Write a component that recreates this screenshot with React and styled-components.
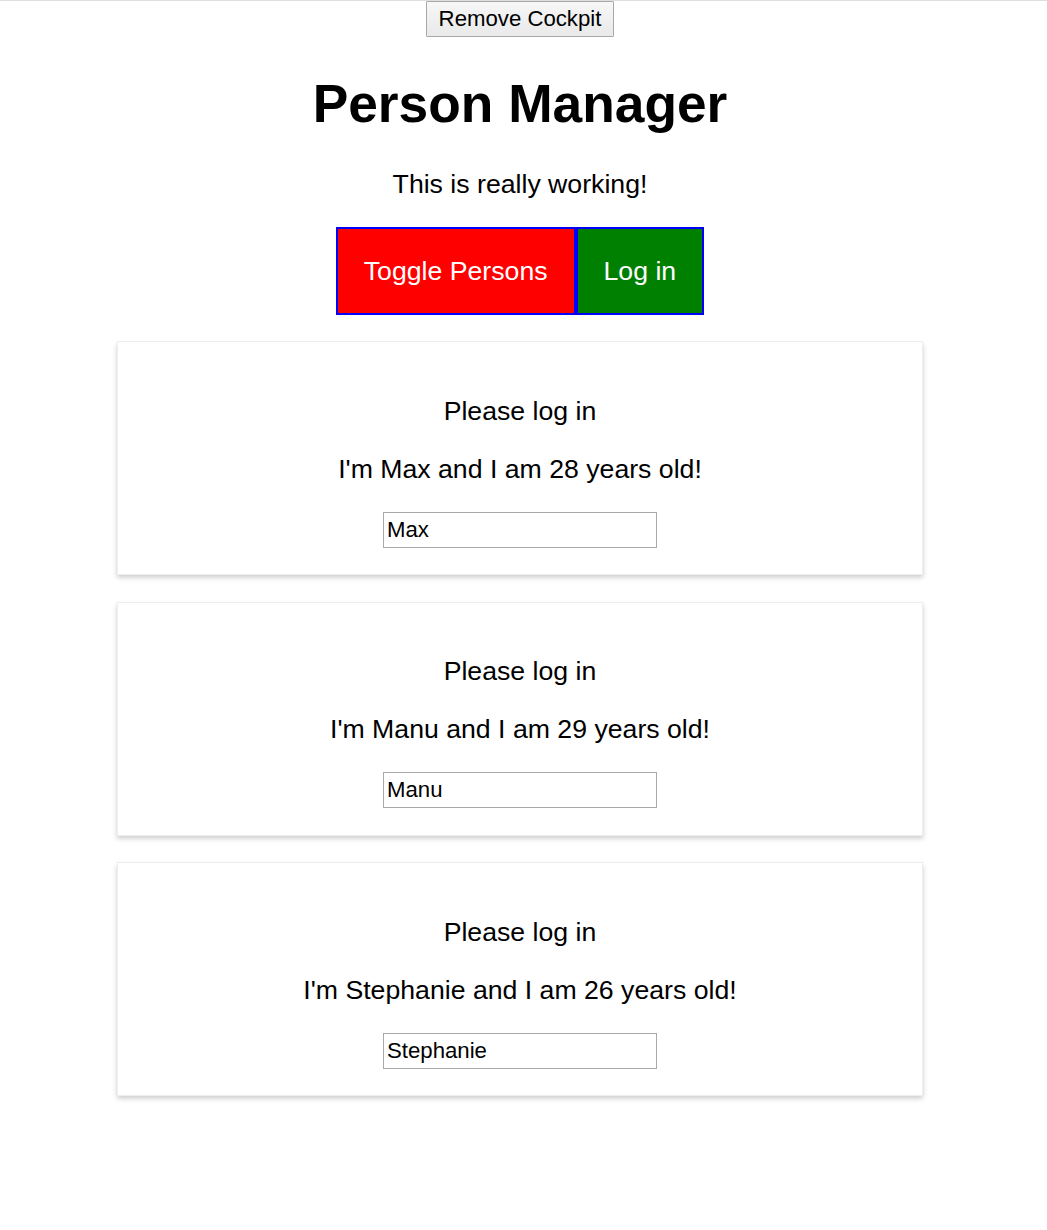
import React, { useState } from "react";
import styled, { createGlobalStyle } from "styled-components";

const GlobalStyle = createGlobalStyle`
  html, body {
    margin: 0;
    padding: 0;
    background: #fff;
  }
  body {
    border-top: 1px solid #dedede;
    font-family: "Liberation Sans", Arial, sans-serif;
    color: #000;
  }
`;

const AppWrap = styled.div`
  width: 1040px;
  text-align: center;
`;

const CockpitToggle = styled.button`
  box-sizing: border-box;
  height: 36px;
  padding: 0 12px;
  font-family: "Liberation Sans", Arial, sans-serif;
  font-size: 22.2px;
  color: #000;
  background: linear-gradient(#f7f7f7, #e9e9e9);
  border: 1.5px solid #a8a8a8;
  border-radius: 1px;
  cursor: pointer;
`;

const CockpitBox = styled.div`
  text-align: center;
`;

const Title = styled.h1`
  margin: 35.7px 0;
  font-size: 53.3px;
  font-weight: bold;
  line-height: 61px;
`;

const Text = styled.p`
  margin: 26.7px 0;
  font-size: 26.67px;
  line-height: ${(p) => (p.$tight ? "30.7px" : "31.2px")};
`;

const ButtonRow = styled.div`
  display: flex;
  justify-content: center;
`;

const ActionButton = styled.button`
  box-sizing: border-box;
  padding: 26px;
  font-family: "Liberation Sans", Arial, sans-serif;
  font-size: 26.67px;
  line-height: 32px;
  color: #fff;
  background-color: ${(p) => p.$bg};
  border: 2px solid blue;
  cursor: pointer;
`;

const Card = styled.div`
  width: 750px;
  margin: 26.7px auto;
  padding: 26.67px;
  border: 1.67px solid #eee;
  box-shadow: 0 3.3px 5px #ccc;
  text-align: center;
`;

const NameInput = styled.input`
  box-sizing: border-box;
  width: 274px;
  height: 36px;
  padding: 0 3px;
  font-family: "Liberation Sans", Arial, sans-serif;
  font-size: 22.2px;
  color: #000;
  border: 1.5px solid #a9a9a9;
`;

const InputLine = styled.div`
  display: flex;
  justify-content: center;
`;

function Person({ name, age, onChange }) {
  return (
    <Card>
      <Text>Please log in</Text>
      <Text>
        I'm {name} and I am {age} years old!
      </Text>
      <InputLine>
        <NameInput type="text" value={name} onChange={onChange} />
      </InputLine>
    </Card>
  );
}

export default function App() {
  const [persons, setPersons] = useState([
    { id: "a1", name: "Max", age: 28 },
    { id: "a2", name: "Manu", age: 29 },
    { id: "a3", name: "Stephanie", age: 26 },
  ]);
  const [showCockpit, setShowCockpit] = useState(true);
  const [showPersons, setShowPersons] = useState(true);

  const changeName = (id, value) =>
    setPersons((prev) => prev.map((p) => (p.id === id ? { ...p, name: value } : p)));

  return (
    <>
      <GlobalStyle />
      <AppWrap>
        <CockpitToggle onClick={() => setShowCockpit((s) => !s)}>
          Remove Cockpit
        </CockpitToggle>
        {showCockpit && (
          <CockpitBox>
            <Title>Person Manager</Title>
            <Text $tight>This is really working!</Text>
            <ButtonRow>
              <ActionButton $bg="red" onClick={() => setShowPersons((s) => !s)}>
                Toggle Persons
              </ActionButton>
              <ActionButton $bg="green">Log in</ActionButton>
            </ButtonRow>
          </CockpitBox>
        )}
        {showPersons &&
          persons.map((p) => (
            <Person
              key={p.id}
              name={p.name}
              age={p.age}
              onChange={(e) => changeName(p.id, e.target.value)}
            />
          ))}
      </AppWrap>
    </>
  );
}
